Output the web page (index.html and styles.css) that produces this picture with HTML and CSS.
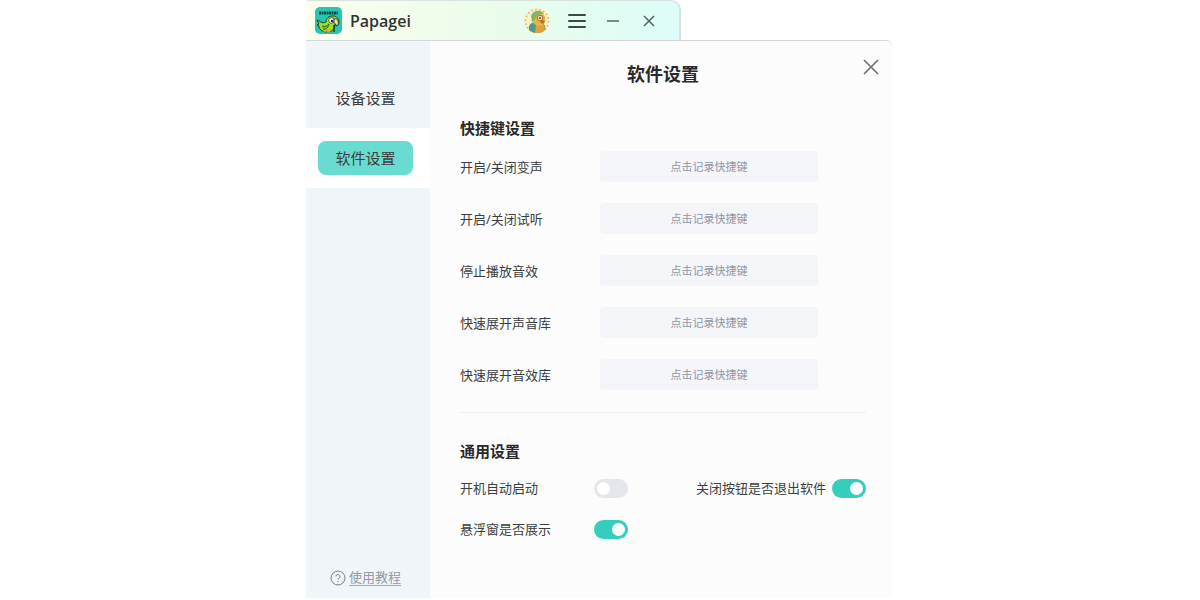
FILE: index.html
```html
<!DOCTYPE html>
<html lang="zh-CN">
<head>
<meta charset="utf-8">
<meta name="viewport" content="width=device-width, initial-scale=1">
<title>Papagei</title>
<link rel="stylesheet" href="styles.css">
</head>
<body>
<div class="app">
  <header class="titlebar">
    <svg class="logo" viewBox="0 0 27 27" aria-hidden="true">
      <rect width="27" height="27" rx="5" fill="#25c6b2"/>
      <path d="M4 6h19" stroke="#0d4d43" stroke-width="3" stroke-dasharray="2 .5"/>
      <path d="M2 13l4 2c1 1 3 1 5 0 0-4 3-6 7-6 4 0 6 3 6 7l-2 3-2-2c0 5-3 8-8 8-5 0-8-3-8-6l-2-1 2-1z" fill="#a2dc28" stroke="#183f28" stroke-width="1"/>
      <path d="M7 19c3 1 5 0 7-2-1 4-3 6-6 5" fill="#6dbb1c" stroke="#285b20" stroke-width=".8"/>
      <circle cx="16.500" cy="13.500" r="2.800" fill="#fff" stroke="#222" stroke-width=".7"/>
      <circle cx="17" cy="14" r="1.200" fill="#222"/>
      <path d="M19 12c3-1 5 2 4 6l-2 1c0-2-1-3-2-3z" fill="#eee3bd" stroke="#222" stroke-width=".8"/>
      <path d="M19 18v7" stroke="#183f28" stroke-width="1.500"/>
      <path d="M9 25l3-2 1 2 3-2" fill="none" stroke="#f4a22b" stroke-width="1.500"/>
    </svg>
    <span class="brand">Papagei</span>
    <div class="window-tools">
      <button class="tool avatar" aria-label="账户">
        <svg width="28" height="28" viewBox="0 0 28 28" aria-hidden="true">
          <circle cx="14" cy="14" r="13" fill="#faf0c9"/>
          <circle cx="14" cy="14" r="11.500" fill="none" stroke="#d9b653" stroke-width="1.500" stroke-dasharray="1.500 2.500"/>
          <path d="M6 23c-1-5 2-7 5-8l7 1c4 1 5 4 4 7-4 4-12 4-16 0z" fill="#4a9a91"/>
          <path d="M13 18l8 0c1 2 1 4 0 6-3 2-6 2-9 2z" fill="#e3a238"/>
          <path d="M9 11c0-6 11-8 13-1 1 5-1 9-5 9-5 0-8-3-8-8z" fill="#e5b63c"/>
          <path d="M8 9c2-6 10-7 13-2-4-1-7 0-8 3-1 3-3 4-4 5z" fill="#7fb66b"/>
          <circle cx="17" cy="11" r="2.800" fill="#f6e4b0" stroke="#a9672e"/>
          <circle cx="17" cy="11" r="1" fill="#593c24"/>
          <path d="M19 13l3 1-2 3-3-2z" fill="#c8652d"/>
        </svg>
      </button>
      <button class="tool" aria-label="菜单">
        <svg width="18" height="16" viewBox="0 0 18 16" aria-hidden="true"><path d="M1 2h16M1 8h16M1 14h16" stroke="#3d4847" stroke-width="2" stroke-linecap="round"/></svg>
      </button>
      <button class="tool" aria-label="最小化">
        <svg width="14" height="14" viewBox="0 0 14 14" aria-hidden="true"><path d="M1 7h12" stroke="#596564" stroke-width="1.500"/></svg>
      </button>
      <button class="tool" aria-label="关闭窗口">
        <svg width="12" height="12" viewBox="0 0 12 12" aria-hidden="true"><path d="M1 1l10 10M11 1L1 11" stroke="#596564" stroke-width="1.500"/></svg>
      </button>
    </div>
  </header>

  <div class="panel">
    <aside class="sidebar">
      <nav class="nav">
        <div class="nav-item"><button class="nav-button">设备设置</button></div>
        <div class="nav-item current"><button class="nav-button" aria-current="page">软件设置</button></div>
      </nav>
      <a class="tutorial" href="#">
        <svg width="16" height="16" viewBox="0 0 16 16" fill="none" stroke="#777e86" aria-hidden="true"><circle cx="8" cy="8" r="7"/><path d="M6 6.500a2 2 0 1 1 3 1.700c-.7.400-1 .8-1 1.600"/><path d="M8 11v1.200"/></svg>
        <span class="tutorial-text">使用教程</span>
      </a>
    </aside>

    <main class="content">
      <h1 class="title">软件设置</h1>
      <button class="close" aria-label="关闭">
        <svg width="16" height="16" viewBox="0 0 16 16" aria-hidden="true"><path d="M1 1l14 14M15 1L1 15" stroke="#737373" stroke-width="1.700"/></svg>
      </button>

      <section class="shortcuts">
        <h2 class="heading">快捷键设置</h2>
        <div class="rows">
          <div class="row"><label for="k1">开启/关闭变声</label><input class="key" id="k1" type="text" readonly placeholder="点击记录快捷键"></div>
          <div class="row"><label for="k2">开启/关闭试听</label><input class="key" id="k2" type="text" readonly placeholder="点击记录快捷键"></div>
          <div class="row"><label for="k3">停止播放音效</label><input class="key" id="k3" type="text" readonly placeholder="点击记录快捷键"></div>
          <div class="row"><label for="k4">快速展开声音库</label><input class="key" id="k4" type="text" readonly placeholder="点击记录快捷键"></div>
          <div class="row"><label for="k5">快速展开音效库</label><input class="key" id="k5" type="text" readonly placeholder="点击记录快捷键"></div>
        </div>
      </section>

      <section class="general">
        <h2 class="heading">通用设置</h2>
        <div class="options">
          <div class="option"><label for="s1">开机自动启动</label><input class="switch" id="s1" type="checkbox"></div>
          <div class="option"><label for="s2">关闭按钮是否退出软件</label><input class="switch" id="s2" type="checkbox" checked></div>
          <div class="option"><label for="s3">悬浮窗是否展示</label><input class="switch" id="s3" type="checkbox" checked></div>
        </div>
      </section>
    </main>
  </div>
</div>
</body>
</html>
```
FILE: styles.css
```css
* { box-sizing: border-box; }

body {
  margin: 0;
  padding: 0 2px 2px 0;
  background: #fff;
  color: #3c3e40;
  font: 13px/20px "Noto Sans", "Noto Sans CJK SC", sans-serif;
}

button {
  border: 0;
  padding: 0;
  background: none;
  color: inherit;
  font: inherit;
  cursor: pointer;
}

.app {
  display: flex;
  flex-direction: column;
  max-width: 586px;
  min-height: calc(100vh - 2px);
  margin: 0 auto;
}

.titlebar {
  display: flex;
  align-items: center;
  width: 64%;
  height: 40px;
  padding: 0 18px 0 9px;
  border: 1px solid #d9e2df;
  border-width: 1px 2px 0 0;
  border-radius: 4px 10px 0 0;
  background: linear-gradient(90deg, #fcfeee, #eafcea 50%, #dcfdf9);
}

.logo { width: 27px; height: 27px; }

.brand {
  margin-left: 8px;
  color: #303534;
  font: 600 16px/24px "Open Sans", sans-serif;
}

.window-tools {
  display: flex;
  align-items: center;
  gap: 12px;
  margin-left: auto;
}

.tool {
  display: grid;
  place-items: center;
  width: 24px;
  height: 28px;
}

.avatar { width: 28px; margin-right: 2px; }

.panel {
  display: flex;
  flex: 1;
  border-top: 1px solid #d3d7d7;
  border-radius: 0 6px 0 0;
  background: #fcfcfc;
}

.sidebar {
  display: flex;
  flex-direction: column;
  justify-content: space-between;
  flex: none;
  width: 124px;
  padding: 27px 0 12px;
  background: #f0f5f9;
}

.nav-item { padding: 13px 17px 13px 12px; }
.nav-item.current { background: #fff; }

.nav-button {
  width: 100%;
  height: 34px;
  border-radius: 8px;
  font-size: 15px;
  line-height: 22px;
}

.current .nav-button { background: #68dcd0; }

.tutorial {
  display: flex;
  align-items: center;
  gap: 3px;
  padding-left: 24px;
  color: #9398a5;
  text-decoration: none;
}

.tutorial-text {
  border-bottom: 1px solid #a4a8b2;
  line-height: 16px;
}

.content {
  position: relative;
  flex: 1;
  padding: 20px 26px 20px 30px;
}

.title {
  margin: 0;
  color: #292929;
  font-size: 18px;
  line-height: 26px;
  text-align: center;
}

.close {
  position: absolute;
  top: 17px;
  right: 12px;
  display: grid;
  place-items: center;
  width: 18px;
  height: 18px;
}

.heading {
  margin: 0;
  color: #292929;
  font-size: 15px;
  line-height: 22px;
}

.shortcuts {
  padding: 30px 0 22px;
  border-bottom: 1px solid #eeeff0;
}

.rows {
  display: grid;
  gap: 21px;
  padding-top: 12px;
}

.row {
  display: grid;
  grid-template-columns: 140px minmax(0, 218px);
  align-items: center;
}

.key {
  width: 100%;
  height: 31px;
  padding: 0;
  border: 0;
  border-radius: 4px;
  background: #f3f5f9;
  font: inherit;
  font-size: 11px;
  text-align: center;
}

.key::placeholder { color: #9196a3; opacity: 1; }

.general { padding-top: 27px; }

.options {
  display: grid;
  grid-template-columns: 168px auto;
  justify-content: space-between;
  row-gap: 21px;
  padding-top: 16px;
}

.option {
  display: flex;
  align-items: center;
  justify-content: space-between;
  gap: 6px;
}

.switch {
  display: flex;
  align-items: center;
  appearance: none;
  width: 34px;
  height: 19px;
  margin: 0;
  padding: 0 3px;
  border-radius: 10px;
  background: #e3e6eb;
  cursor: pointer;
}

.switch::before {
  content: "";
  width: 13px;
  height: 13px;
  border-radius: 50%;
  background: #fff;
}

.switch:checked {
  justify-content: flex-end;
  background: #35cdbd;
}
```
